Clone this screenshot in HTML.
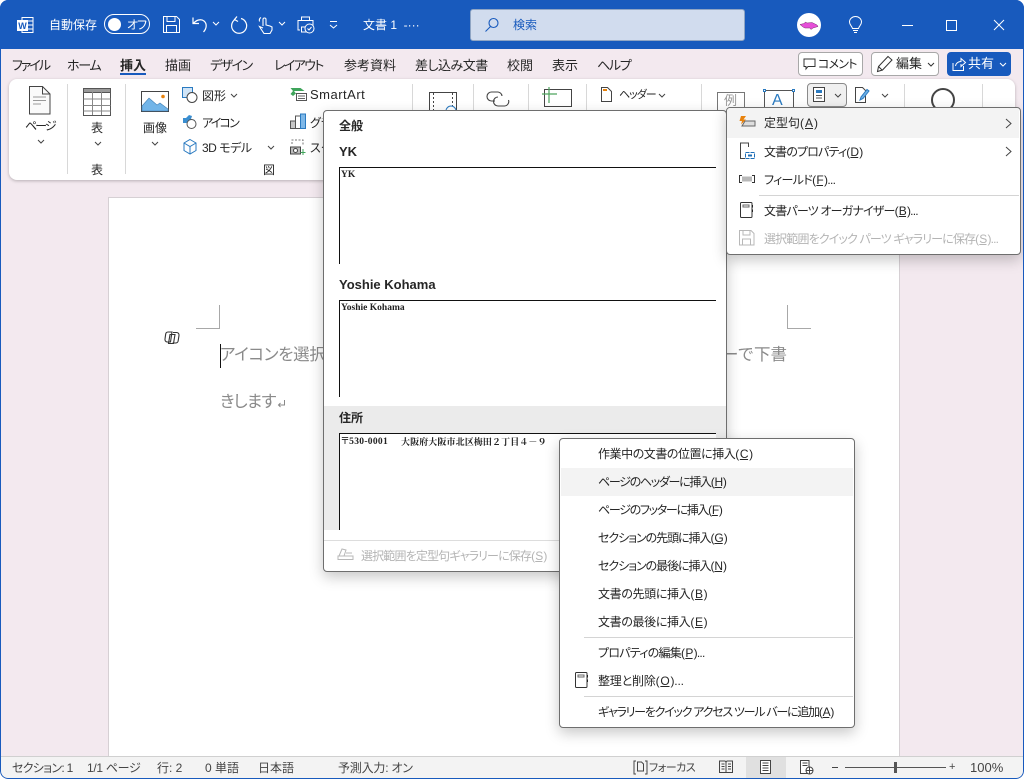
<!DOCTYPE html>
<html lang="ja"><head><meta charset="utf-8"><title>Word</title>
<style>
*{box-sizing:border-box}
html,body{margin:0;padding:0;width:1024px;height:779px;overflow:hidden;background:#fff}
body{font-family:"Liberation Sans","Noto Sans CJK JP",sans-serif;font-size:12px;color:#262626;position:relative;font-feature-settings:"palt" 1}
.t{position:absolute;white-space:nowrap;line-height:16px;height:16px}
.b{position:absolute}
svg{position:absolute;overflow:visible}
#win{position:absolute;left:0;top:0;width:1024px;height:779px;background:#f3e9ef;border-radius:8px;overflow:hidden}
#frame{position:absolute;left:0;top:0;width:1024px;height:779px;border:1px solid #185abd;border-radius:8px}
#title{position:absolute;left:0;top:0;width:1024px;height:49px;background:#185abd}
.w{color:#fff}
.tab{font-size:13px;color:#262626;top:58px}
.rib{font-size:12px;color:#262626}
.sep{position:absolute;width:1px;background:#d8d8d8}
.menu{position:absolute;background:#fff;border:1px solid #6e6e6e;border-radius:4px;box-shadow:0 5px 14px rgba(0,0,0,.22)}
.mi{font-size:12px;color:#262626}
.u{text-decoration:underline;margin:0 1px}
.dis{color:#b4b4b4}
.st{font-size:12px;color:#444;top:760px}
.pv{font-family:"Liberation Serif","Noto Serif CJK SC",serif;font-weight:bold;font-size:9.500px;color:#222}
.h{font-size:13px;font-weight:bold;color:#262626}
</style></head><body>
<div id="win">
<div id="title"></div>

<!-- Title bar -->
<svg style="left:16px;top:15px" width="20" height="20" viewBox="0 0 20 20"><path d="M6 2.500h11v15H6z" fill="none" stroke="#fff"/><path d="M11 6h6M11 10h6M11 14h6" stroke="#fff"/><rect x="1" y="5" width="11" height="11" fill="#fff"/><text x="6.500" y="14" font-size="9" font-weight="bold" fill="#185abd" text-anchor="middle" font-family="Liberation Sans">W</text></svg>
<div class="t w" style="left:49px;top:17px;font-size:12px">自動保存</div>
<div class="b" style="left:104px;top:14px;width:46px;height:20px;border:1px solid #fff;border-radius:10px"></div>
<div class="b" style="left:108px;top:18px;width:13px;height:13px;border-radius:50%;background:#fff"></div>
<div class="t w" style="left:127px;top:17px;font-size:12px;letter-spacing:-1px">オフ</div>
<svg style="left:163px;top:16px" width="17" height="17" fill="none" stroke="#fff"><path d="M.5.500h13l3 3v13H.5z"/><path d="M4 .5v5h8v-5M3.500 16.500v-7h10v7"/></svg>
<svg style="left:192px;top:16px" width="18" height="18" fill="none" stroke="#fff" stroke-width="1.200"><path d="M1 1.500v6h6M1.500 7.500C4 4 9 2.500 12 5s3 7-.5 11"/></svg>
<svg style="left:212px;top:21px" width="8" height="6" fill="none" stroke="#fff"><path d="M1 1l3 3 3-3"/></svg>
<svg style="left:230px;top:16px" width="18" height="18" fill="none" stroke="#fff" stroke-width="1.200"><path d="M5 3.500A7.500 7.500 0 1 0 11 2.500M7 .5L4.500 3.500 8 5.500"/></svg>
<svg style="left:258px;top:16px" width="16" height="18" fill="none" stroke="#fff" stroke-width="1.100"><path d="M5 10V3.500a1.500 1.500 0 0 1 3 0V9l4 1 2 1v3l-2 3.500H6L3 13 1.500 10.500 5 12M1.500 5.500a3.500 3.500 0 0 1 1.500-4"/></svg>
<svg style="left:278px;top:21px" width="8" height="6" fill="none" stroke="#fff"><path d="M1 1l3 3 3-3"/></svg>
<svg style="left:297px;top:16px" width="18" height="18" fill="none" stroke="#fff"><path d="M4.500 4V1h8v3M3 14H1V4.500h15V10M4.500 11h5v5h-5z"/><circle cx="12.500" cy="12.500" r="4.500" fill="#185abd"/><path d="M10.500 12.500l1.500 1.500 2.500-3"/></svg>
<svg style="left:329px;top:21px" width="9" height="8" fill="none" stroke="#fff"><path d="M1 .5h7M1 4l3.500 3L8 4"/></svg>
<div class="t w" style="left:363px;top:17px;font-size:12px">文書 1 &nbsp;-···</div>
<div class="b" style="left:470px;top:9px;width:275px;height:32px;background:#d1dcee;border:1px solid #8fa5c4;border-radius:3px"></div>
<svg style="left:484px;top:17px" width="16" height="16" fill="none" stroke="#185abd" stroke-width="1.100"><circle cx="9.500" cy="6" r="4.500"/><path d="M6.500 9.500L1.500 14.500"/></svg>
<div class="t" style="left:513px;top:17px;font-size:12px;color:#185abd">検索</div>
<div class="b" style="left:797px;top:13px;width:24px;height:24px;border-radius:50%;background:#fff"></div>
<svg style="left:799px;top:20px" width="22" height="10"><path d="M1 4.500l4-1 1.500-1.500 1.500 1 5-.5 5 2.500 1 1.500-5 1.500-2 1.500-1-1.500H6L4 7z" fill="#e64fd8" stroke="#7a3070" stroke-width=".5"/></svg>
<svg style="left:848px;top:16px" width="15" height="18" fill="none" stroke="#fff"><path d="M4.500 12.500C4 10 1.500 9 1.500 6a6 5.500 0 0 1 12 0c0 3-2.500 4-3 6.500zM5 14.500h5M6 16.500h3"/></svg>
<div class="b" style="left:902px;top:25px;width:11px;height:1px;background:#fff"></div>
<div class="b" style="left:946px;top:20px;width:11px;height:11px;border:1px solid #fff"></div>
<svg style="left:993px;top:19px" width="12" height="12" stroke="#fff" fill="none"><path d="M1 1l10 10M11 1L1 11"/></svg>

<!-- Tabs -->
<div class="t tab" style="left:12px;letter-spacing:-2px">ファイル</div>
<div class="t tab" style="left:67px;letter-spacing:-1.300px">ホーム</div>
<div class="t tab" style="left:120px;font-weight:bold;">挿入</div>
<div class="b" style="left:120px;top:73px;width:26px;height:2px;background:#185abd"></div>
<div class="t tab" style="left:165px">描画</div>
<div class="t tab" style="left:210px;letter-spacing:-1.500px">デザイン</div>
<div class="t tab" style="left:274px;letter-spacing:-1.600px">レイアウト</div>
<div class="t tab" style="left:344px">参考資料</div>
<div class="t tab" style="left:415px;letter-spacing:-.5px">差し込み文書</div>
<div class="t tab" style="left:507px">校閲</div>
<div class="t tab" style="left:552px">表示</div>
<div class="t tab" style="left:597px;letter-spacing:-1.300px">ヘルプ</div>

<div class="b" style="left:798px;top:52px;width:65px;height:24px;background:#fff;border:1px solid #a8a8a8;border-radius:4px"></div>
<svg style="left:803px;top:58px" width="13" height="13" fill="none" stroke="#333"><path d="M1 1h11v7.500H5L3 11V8.500H1z"/></svg>
<div class="t" style="left:818px;top:56px;font-size:12px;letter-spacing:-.8px">コメント</div>
<div class="b" style="left:871px;top:52px;width:68px;height:24px;background:#fff;border:1px solid #a8a8a8;border-radius:4px"></div>
<svg style="left:876px;top:55px" width="17" height="18" fill="none" stroke="#333"><path d="M1.500 16.500l1-5L12 1.500l4 3.500-9.500 10zM2.500 11.500l4 4"/></svg>
<div class="t" style="left:896px;top:56px;font-size:13px">編集</div>
<svg style="left:927px;top:62px" width="8" height="6" fill="none" stroke="#333"><path d="M1 1l3 3 3-3"/></svg>
<div class="b" style="left:947px;top:52px;width:64px;height:24px;background:#185abd;border-radius:4px"></div>
<svg style="left:952px;top:57px" width="14" height="14" fill="none" stroke="#fff"><path d="M1 6v7.500h10.500V9M3.500 9C4 6 6.500 4.500 9 4.500V1.500l4.500 4-4.500 4V7"/></svg>
<div class="t w" style="left:968px;top:56px;font-size:13px">共有</div>
<svg style="left:999px;top:62px" width="8" height="6" fill="none" stroke="#fff"><path d="M1 1l3 3 3-3"/></svg>

<!-- Ribbon -->
<div class="b" style="left:9px;top:79px;width:1006px;height:101px;background:#fff;border-radius:8px;box-shadow:0 1px 3px rgba(0,0,0,.25)"></div>
<div class="sep" style="left:67px;top:84px;height:90px"></div>
<div class="sep" style="left:125px;top:84px;height:90px"></div>
<div class="sep" style="left:412px;top:84px;height:26px"></div>
<div class="sep" style="left:473px;top:84px;height:26px"></div>
<div class="sep" style="left:528px;top:84px;height:26px"></div>
<div class="sep" style="left:586px;top:84px;height:26px"></div>
<div class="sep" style="left:701px;top:84px;height:26px"></div>
<div class="sep" style="left:904px;top:84px;height:24px"></div>
<div class="sep" style="left:982px;top:84px;height:24px"></div>

<svg style="left:29px;top:86px" width="22" height="29" fill="#fafafa" stroke="#444"><path d="M.5.500h13l7.500 7.500v20H.5z"/><path d="M13.500.500V8H21" fill="none"/><path d="M4 11h13M4 14.500h13M4 18h8" stroke="#999" fill="none"/></svg>
<div class="t rib" style="left:25px;top:118px;letter-spacing:-2px">ページ</div>
<svg style="left:37px;top:139px" width="8" height="6" fill="none" stroke="#444"><path d="M1 1l3 3 3-3"/></svg>

<svg style="left:83px;top:88px" width="29" height="28" fill="#fff" stroke="#555"><rect x=".5" y=".5" width="27" height="27"/><rect x=".5" y=".5" width="27" height="4" fill="#999"/><path d="M.5 11h27M.5 17.500h27M.5 23h27M9.500 4v23M18.500 4v23" stroke="#888"/></svg>
<div class="t rib" style="left:91px;top:120px">表</div>
<svg style="left:94px;top:141px" width="8" height="6" fill="none" stroke="#444"><path d="M1 1l3 3 3-3"/></svg>
<div class="t rib" style="left:91px;top:162px">表</div>

<svg style="left:141px;top:91px" width="28" height="21"><rect x=".5" y=".5" width="27" height="20" fill="#fff" stroke="#444"/><path d="M1 20V15l7-8 8 7 3-2 8 6v2z" fill="#72b5e8" stroke="#3f7fb5" stroke-width=".6"/><circle cx="22" cy="5.500" r="1.800" fill="#e8820c"/></svg>
<div class="t rib" style="left:143px;top:120px">画像</div>
<svg style="left:151px;top:141px" width="8" height="6" fill="none" stroke="#444"><path d="M1 1l3 3 3-3"/></svg>

<svg style="left:182px;top:87px" width="16" height="16"><rect x=".5" y=".5" width="10" height="10" fill="#cfe4f7" stroke="#2a7ac0"/><circle cx="10" cy="10.500" r="5" fill="#fff" stroke="#444"/></svg>
<div class="t rib" style="left:202px;top:88px">図形</div>
<svg style="left:230px;top:93px" width="8" height="6" fill="none" stroke="#444"><path d="M1 1l3 3 3-3"/></svg>
<svg style="left:182px;top:113px" width="16" height="17"><path d="M1 5l3 0 3-3 3 1-1 3 4 1-3 3H1z" fill="#3a8ed0"/><circle cx="9.500" cy="11" r="4.500" fill="#fff" stroke="#555"/></svg>
<div class="t rib" style="left:202px;top:115px;letter-spacing:-1.800px">アイコン</div>
<svg style="left:183px;top:139px" width="14" height="16" fill="#fff" stroke="#2a7ac0"><path d="M7 .5l6 3.500v7.500l-6 3.500-6-3.500V4zM1 4l6 3.500L13 4M7 7.500v7.500"/></svg>
<div class="t rib" style="left:202px;top:140px;letter-spacing:-.5px">3D モデル</div>
<svg style="left:267px;top:145px" width="8" height="6" fill="none" stroke="#444"><path d="M1 1l3 3 3-3"/></svg>

<svg style="left:290px;top:88px" width="17" height="14"><path d="M.5 0h10l4 3H4l2 2.500L3 8 .5 6 3 3z" fill="#3fa45b"/><rect x="6.500" y="5.500" width="10" height="7" fill="#fff" stroke="#555"/><path d="M8 8h7M8 10.500h7" stroke="#666"/></svg>
<div class="t rib" style="left:310px;top:87px;font-size:13px;letter-spacing:.5px">SmartArt</div>
<svg style="left:290px;top:113px" width="16" height="16"><rect x=".5" y="8" width="5" height="7.500" fill="#c8c8c8" stroke="#555"/><rect x="5.500" y="3" width="5" height="12.500" fill="#fff" stroke="#555"/><rect x="10.500" y="1" width="5" height="14.500" fill="#7fb8e8" stroke="#2a7ac0"/></svg>
<div class="t rib" style="left:310px;top:115px">グラ</div>
<svg style="left:290px;top:139px" width="16" height="17" fill="none"><path d="M2 5V1h11v5" stroke="#777" stroke-dasharray="2 1.500"/><rect x=".5" y="8" width="10" height="7" fill="#bbb" stroke="#444"/><circle cx="5.500" cy="11.500" r="2" fill="#fff" stroke="#444"/><path d="M13 10v6M10.500 13.500h5" stroke="#3fa45b"/></svg>
<div class="t rib" style="left:310px;top:140px">スク</div>
<div class="t rib" style="left:263px;top:162px">図</div>

<svg style="left:429px;top:92px" width="29" height="18" fill="#fff" stroke="#444"><rect x=".5" y=".5" width="27" height="24"/><path d="M4.500 1v24M23.500 1v24" stroke-dasharray="2 2"/><circle cx="22" cy="19" r="5" stroke="#2a7ac0"/></svg>
<svg style="left:486px;top:90px" width="30" height="20" fill="none" stroke="#444" stroke-width="1.100"><path d="M9 11H5.500a4.500 4.500 0 0 1 0-9H12a4.500 4.500 0 0 1 4 4M12 7a4.500 4.500 0 0 0 0 9h6.500a4.500 4.500 0 0 0 4-6"/></svg>
<svg style="left:542px;top:86px" width="32" height="24"><rect x="2.500" y="3.500" width="27" height="17" fill="#fff" stroke="#444"/><path d="M7 1v16M0 8h15" stroke="#4ea45e" stroke-width="1.200"/></svg>
<svg style="left:601px;top:87px" width="11" height="15" fill="#fff" stroke="#444"><path d="M.5.500h6l4 4v10H.5z"/><rect x="2" y="2" width="4" height="2" fill="#e8820c" stroke="none"/></svg>
<div class="t rib" style="left:619px;top:87px;font-size:11px;letter-spacing:-1px">ヘッダー</div>
<svg style="left:658px;top:93px" width="8" height="6" fill="none" stroke="#444"><path d="M1 1l3 3 3-3"/></svg>
<div class="b" style="left:717px;top:92px;width:28px;height:22px;border:1px solid #777;background:#fff"></div>
<div class="t" style="left:724px;top:93px;color:#999;font-size:13px">例</div>
<div class="b" style="left:764px;top:90px;width:30px;height:22px;border:1px solid #555;background:#fff"></div>
<div class="b" style="left:763px;top:89px;width:3px;height:3px;background:#fff;border:1px solid #2a7ac0"></div>
<div class="b" style="left:792px;top:89px;width:3px;height:3px;background:#fff;border:1px solid #2a7ac0"></div>
<div class="t" style="left:772px;top:93px;color:#2a7ac0;font-size:16px;font-weight:normal">A</div>
<div class="b" style="left:807px;top:83px;width:40px;height:24px;background:#f0f0f0;border:1px solid #8a8a8a;border-radius:4px"></div>
<svg style="left:813px;top:87px" width="13" height="16" fill="#fff" stroke="#444"><rect x=".5" y=".5" width="11" height="14"/><rect x="3" y="3" width="6" height="3" fill="#2a7ac0" stroke="none"/><path d="M3 8.500h6M3 11h6" stroke="#555"/></svg>
<svg style="left:834px;top:93px" width="8" height="6" fill="none" stroke="#444"><path d="M1 1l3 3 3-3"/></svg>
<svg style="left:855px;top:87px" width="16" height="17" fill="#fff" stroke="#444"><path d="M.5.500h7l3 3V15.500H.5z"/><path d="M5 13l1-3 6-7.500 2 1.500-6 7.500z" fill="#6fb1e6" stroke="#2a7ac0"/></svg>
<svg style="left:881px;top:93px" width="8" height="6" fill="none" stroke="#444"><path d="M1 1l3 3 3-3"/></svg>
<div class="b" style="left:931px;top:88px;width:24px;height:24px;border-radius:50%;border:2px solid #444;background:#fff"></div>

<!-- Page -->
<div class="b" style="left:108px;top:197px;width:792px;height:559px;background:#fff;border:1px solid #d6d0d4;border-bottom:0"></div>
<div class="b" style="left:196px;top:305px;width:24px;height:24px;border-right:1px solid #a8a8a8;border-bottom:1px solid #a8a8a8"></div>
<div class="b" style="left:787px;top:305px;width:24px;height:24px;border-left:1px solid #a8a8a8;border-bottom:1px solid #a8a8a8"></div>
<svg style="left:164px;top:331px" width="16" height="14" fill="none" stroke="#333" stroke-width="1.100"><path d="M4 1h4L6.500 11H3A2.500 2.500 0 0 1 1 8l.7-5A2.500 2.500 0 0 1 4 1z"/><path d="M9 1.500h3.500a2.500 2.500 0 0 1 2.500 3l-.8 5a2.500 2.500 0 0 1-2.400 2.500H8.500"/><path d="M6 3.500h5L9.500 12.500h-5z"/></svg>
<div class="t" style="left:220px;top:344px;height:22px;line-height:22px;font-size:16.500px;color:#8a8a8a;letter-spacing:-.3px">アイコンを選択</div>
<div class="b" style="left:220px;top:344px;width:1px;height:24px;background:#111"></div>
<div class="t" style="left:722px;top:344px;height:22px;line-height:22px;font-size:16.500px;color:#8a8a8a;font-feature-settings:normal">ーで下書</div>
<div class="t" style="left:220px;top:391px;height:22px;line-height:22px;font-size:16.500px;color:#8a8a8a;letter-spacing:-.7px">きします</div>
<svg style="left:277px;top:399px" width="9" height="10" fill="none" stroke="#888"><path d="M7.500 1v5H1.500M3.500 4L1.500 6l2 2"/></svg>

<!-- Gallery menu -->
<div class="menu" style="left:323px;top:110px;width:404px;height:462px;"></div>
<div class="t h" style="left:339px;top:118px;font-size:12px">全般</div>
<div class="t h" style="left:339px;top:144px">YK</div>
<div class="b" style="left:339px;top:167px;width:377px;height:97px;border-left:1px solid #111;border-top:1px solid #111"></div>
<div class="t pv" style="left:341px;top:167px">YK</div>
<div class="t h" style="left:339px;top:277px">Yoshie Kohama</div>
<div class="b" style="left:339px;top:300px;width:377px;height:97px;border-left:1px solid #111;border-top:1px solid #111"></div>
<div class="t pv" style="left:341px;top:300px">Yoshie Kohama</div>
<div class="b" style="left:324px;top:406px;width:402px;height:124px;background:#ebebeb"></div>
<div class="t h" style="left:339px;top:410px;font-size:12px">住所</div>
<div class="b" style="left:339px;top:433px;width:377px;height:97px;background:#fff;border-left:1px solid #111;border-top:1px solid #111"></div>
<div class="t pv" style="left:341px;top:434px;font-size:9.500px;letter-spacing:.3px">〒530-0001</div>
<div class="t pv" style="left:401px;top:434px;font-size:9px;font-feature-settings:normal;letter-spacing:.1px">大阪府大阪市北区梅田２丁目４－９</div>
<div class="b" style="left:324px;top:540px;width:402px;height:1px;background:#ddd"></div>
<svg style="left:337px;top:547px" width="17" height="14" fill="none" stroke="#b8b8b8"><path d="M1 12.500V9h15v3.500zM2 9l3-7 4 1-2 6M9 6h6"/></svg>
<div class="t mi dis" style="left:361px;top:548px;letter-spacing:-.85px">選択範囲を定型句ギャラリーに保存(<span class="u">S</span>)</div>

<!-- Quick parts menu -->
<div class="menu" style="left:726px;top:107px;width:295px;height:148px;"></div>
<div class="b" style="left:727px;top:108px;width:292px;height:30px;background:#f3f3f3;border-radius:3px 3px 0 0"></div>
<svg style="left:738px;top:115px" width="18" height="14"><path d="M7 6h10v5H4z" fill="#ddd" stroke="#666"/><path d="M3 1h5L5.500 4.500h2.500l-5 5 1-3.500H1.500z" fill="#e8820c"/></svg>
<div class="t mi" style="left:764px;top:115px">定型句(<span class="u">A</span>)</div>
<svg style="left:1005px;top:118px" width="7" height="11" fill="none" stroke="#444"><path d="M1 1l5 4.500L1 10"/></svg>
<svg style="left:739px;top:142px" width="16" height="18" fill="none" stroke="#444"><path d="M6 16.500H1.500V1h8v4"/><rect x="6.500" y="10.500" width="9" height="6" stroke="#1e6fb8" stroke-dasharray="4 1"/><rect x="9" y="12.500" width="4" height="2" fill="#1e6fb8" stroke="none"/></svg>
<div class="t mi" style="left:764px;top:144px;letter-spacing:-.85px">文書のプロパティ(<span class="u">D</span>)</div>
<svg style="left:1005px;top:146px" width="7" height="11" fill="none" stroke="#444"><path d="M1 1l5 4.500L1 10"/></svg>
<svg style="left:739px;top:175px" width="17" height="9"><rect x="3" y="1.500" width="10" height="5" fill="#b8b8b8"/><path d="M3 .5H.5v7H3M13 .5h2.500v7H13" fill="none" stroke="#333"/></svg>
<div class="t mi" style="left:764px;top:172px;letter-spacing:-.7px">フィールド(<span class="u">F</span>)...</div>
<div class="b" style="left:759px;top:195px;width:260px;height:1px;background:#d4d4d4"></div>
<svg style="left:739px;top:202px" width="15" height="17" fill="#fff" stroke="#333"><rect x="1.500" y=".5" width="11.500" height="15" rx="1"/><rect x="4" y="3" width="6" height="2" fill="none" stroke="#666"/><path d="M13.500 3v2.500M13.500 7.500v2.500" stroke="#222"/></svg>
<div class="t mi" style="left:764px;top:203px;letter-spacing:-.8px">文書パーツ オーガナイザー(<span class="u">B</span>)...</div>
<svg style="left:739px;top:230px" width="16" height="16" fill="none" stroke="#b8b8b8"><path d="M.5.500h11.500l3 3V15H.5z"/><path d="M4 1v4h7V1M3.500 15V9h8v6"/></svg>
<div class="t mi dis" style="left:764px;top:231px;letter-spacing:-.85px">選択範囲をクイック パーツ ギャラリーに保存(<span class="u">S</span>)...</div>

<!-- Context menu -->
<div class="menu" style="left:559px;top:438px;width:296px;height:290px;"></div>
<div class="b" style="left:561px;top:468px;width:292px;height:28px;background:#f3f3f3"></div>
<div class="t mi" style="left:598px;top:446px;letter-spacing:-.45px">作業中の文書の位置に挿入(<span class="u">C</span>)</div>
<div class="t mi" style="left:598px;top:474px;letter-spacing:-1.300px">ページのヘッダーに挿入(<span class="u">H</span>)</div>
<div class="t mi" style="left:598px;top:502px;letter-spacing:-1.300px">ページのフッターに挿入(<span class="u">F</span>)</div>
<div class="t mi" style="left:598px;top:530px;letter-spacing:-1.050px">セクションの先頭に挿入(<span class="u">G</span>)</div>
<div class="t mi" style="left:598px;top:558px;letter-spacing:-1.050px">セクションの最後に挿入(<span class="u">N</span>)</div>
<div class="t mi" style="left:598px;top:586px;letter-spacing:-.35px">文書の先頭に挿入(<span class="u">B</span>)</div>
<div class="t mi" style="left:598px;top:614px;letter-spacing:-.35px">文書の最後に挿入(<span class="u">E</span>)</div>
<div class="b" style="left:584px;top:637px;width:269px;height:1px;background:#d4d4d4"></div>
<div class="t mi" style="left:598px;top:645px;letter-spacing:-.75px">プロパティの編集(<span class="u">P</span>)...</div>
<svg style="left:574px;top:672px" width="15" height="17" fill="#fff" stroke="#333"><rect x="1.500" y=".5" width="11.500" height="15" rx="1"/><rect x="4" y="3" width="6" height="2" fill="none" stroke="#666"/><path d="M13.500 3v2.500M13.500 7.500v2.500" stroke="#222"/></svg>
<div class="t mi" style="left:598px;top:673px;letter-spacing:-.2px">整理と削除(<span class="u">O</span>)...</div>
<div class="b" style="left:584px;top:696px;width:269px;height:1px;background:#d4d4d4"></div>
<div class="t mi" style="left:598px;top:704px;letter-spacing:-1.250px">ギャラリーをクイック アクセス ツール バーに追加(<span class="u">A</span>)</div>

<!-- Status bar -->
<div class="b" style="left:0;top:756px;width:1024px;height:23px;background:#f3f3f3;border-top:1px solid #d0d0d0"></div>
<div class="t st" style="left:12px;letter-spacing:-.7px">セクション: 1</div>
<div class="t st" style="left:87px;letter-spacing:-.3px">1/1 ページ</div>
<div class="t st" style="left:157px">行: 2</div>
<div class="t st" style="left:205px">0 単語</div>
<div class="t st" style="left:258px">日本語</div>
<div class="t st" style="left:338px;letter-spacing:-.2px">予測入力: オン</div>
<svg style="left:633px;top:760px" width="15" height="15" fill="none" stroke="#444"><path d="M3 1H1v13h2M12 1h2v13h-2"/><path d="M4.500 2h4l2 2v7h-6z"/></svg>
<div class="t st" style="left:649px;font-size:11px;letter-spacing:-.5px">フォーカス</div>
<svg style="left:719px;top:760px" width="14" height="14" fill="none" stroke="#444"><path d="M.5 1h5.500l1 1 1-1h5.500v11.500H.5zM7 2v10.500M2.500 4h3M2.500 6.500h3M2.500 9h3M9 4h3M9 6.500h3M9 9h3"/></svg>
<div class="b" style="left:746px;top:757px;width:40px;height:21px;background:#e0e0e0"></div>
<svg style="left:760px;top:760px" width="12" height="14" fill="#fff" stroke="#444"><path d="M.5.500h10v13H.5z"/><path d="M2.500 3h6M2.500 5.500h6M2.500 8h6M2.500 10.500h6"/></svg>
<svg style="left:800px;top:760px" width="14" height="15" fill="#fff" stroke="#444"><path d="M.5.500h8.500v13H.5z"/><path d="M2.500 3h5M2.500 5.500h5"/><circle cx="9.500" cy="10.500" r="3.500"/><path d="M6 10.500h7M9.500 7v7"/></svg>
<div class="b" style="left:832px;top:767px;width:6px;height:1px;background:#444"></div>
<div class="b" style="left:845px;top:767px;width:101px;height:1px;background:#555"></div>
<div class="b" style="left:894px;top:762px;width:3px;height:11px;background:#555"></div>
<div class="t st" style="left:949px;top:759px;font-size:11px">+</div>
<div class="t st" style="left:970px;font-size:13px">100%</div>
<div id="frame"></div>
</div>
</body></html>
